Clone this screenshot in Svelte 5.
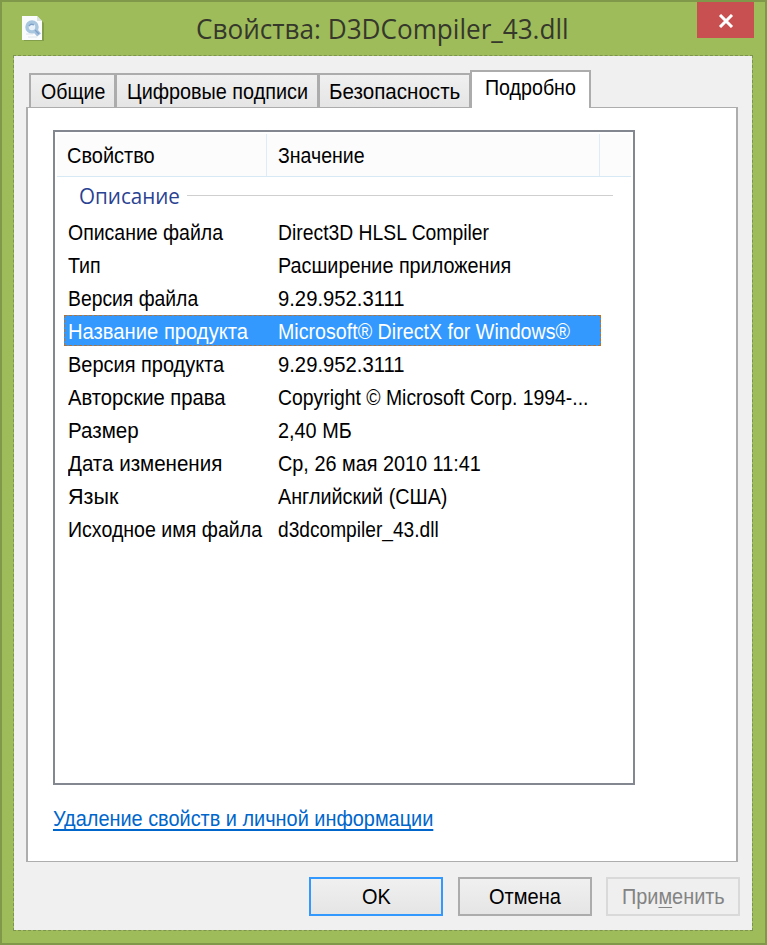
<script>
  const tabs = [
    { label: "Общие", width: 64, size: 87 },
    { label: "Цифровые подписи", width: 181, size: 204 },
    { label: "Безопасность", width: 131, size: 153 },
    { label: "Подробно", width: 91, size: 121 }
  ];

  // name, name width, value, value width
  const properties = [
    ["Описание файла", 155, "Direct3D HLSL Compiler", 211],
    ["Тип", 33, "Расширение приложения", 233],
    ["Версия файла", 130, "9.29.952.3111", 126],
    ["Название продукта", 180, "Microsoft® DirectX for Windows®", 292],
    ["Версия продукта", 156, "9.29.952.3111", 126],
    ["Авторские права", 158, "Copyright © Microsoft Corp. 1994-...", 310],
    ["Размер", 71, "2,40 МБ", 74],
    ["Дата изменения", 154, "Ср, 26 мая 2010 11:41", 203],
    ["Язык", 50, "Английский (США)", 169],
    ["Исходное имя файла", 194, "d3dcompiler_43.dll", 161]
  ];

  let activeTab = $state(3);
  let selected = $state(3);

  // Condense the label so it fills its box exactly
  function fit(node, width) {
    const inner = node.firstElementChild;
    inner.style.transform = `scaleX(${width / inner.offsetWidth})`;
  }
</script>

{#snippet label(text, width)}
  <span class="label" style="width: {width}px" use:fit={width}><span>{text}</span></span>
{/snippet}

<div class="window">
  <header class="titlebar">
    <svg class="file-icon" width="23" height="26" viewBox="0 0 23 26">
      <path d="M2 2h15l5 5v18H2z" fill="#6f8a40" opacity="0.6" />
      <path d="M0 0h15l5 5v19H0z" fill="#fafbfc" />
      <path d="M15 0v5h5z" fill="#dce2e0" />
      <path d="M12 13l5 6" stroke="#a3bfdb" stroke-width="5" />
      <circle cx="10" cy="11" r="5" fill="#e9f2f8" stroke="#a9c6df" stroke-width="3.5" />
      <path d="M7 10q2-3 5-1M13 14l4 4" fill="none" stroke="#7d9fc8" stroke-width="1.4" />
      <path d="M4 18h7M6 21h9" stroke="#dde6ed" />
    </svg>
    <h1>{@render label("Свойства: D3DCompiler_43.dll", 373)}</h1>
    <button class="close" aria-label="Закрыть">
      <svg width="16" height="14" viewBox="0 0 16 14">
        <path d="M2 1l12 12M14 1L2 13" stroke="#fff" stroke-width="3" />
      </svg>
    </button>
  </header>

  <main class="client">
    <nav class="tabs">
      {#each tabs as tab, i}
        <button
          class="tab"
          class:active={i === activeTab}
          style="width: {tab.size}px"
          onclick={() => (activeTab = i)}
        >
          {@render label(tab.label, tab.width)}
        </button>
      {/each}
    </nav>

    <section class="pane">
      <div class="list">
        <div class="list-header">
          <div class="name">{@render label("Свойство", 88)}</div>
          <div class="value">{@render label("Значение", 87)}</div>
          <div></div>
        </div>
        <div class="group">{@render label("Описание", 101)}</div>
        <div class="rows">
          {#each properties as [name, nameWidth, value, valueWidth], i}
            <!-- svelte-ignore a11y_click_events_have_key_events, a11y_no_static_element_interactions -->
            <div class="row" class:selected={i === selected} onclick={() => (selected = i)}>
              <div>{@render label(name, nameWidth)}</div>
              <div>{@render label(value, valueWidth)}</div>
            </div>
          {/each}
        </div>
      </div>
      <div class="link">{@render label("Удаление свойств и личной информации", 380)}</div>
    </section>

    <footer class="buttons">
      <button class="default">{@render label("OK", 29)}</button>
      <button>{@render label("Отмена", 72)}</button>
      <button disabled>
        <span class="label" style="width: 103px" use:fit={103}><span>При<u>м</u>енить</span></span>
      </button>
    </footer>
  </main>
</div>

<style>
  :global(body) {
    margin: 0;
    overflow: hidden;
  }

  .window {
    box-sizing: border-box;
    width: 767px;
    height: 945px;
    padding: 0 12px 12px 11px;
    border: 2px solid #80984a;
    background: #9fbc5b;
    color: #000;
    font: 22px/30px "Liberation Sans", Arial, sans-serif;
  }

  button {
    box-sizing: border-box;
    padding: 0;
    margin: 0;
    border: 0;
    font: inherit;
    color: inherit;
  }

  .label {
    display: inline-block;
    text-align: left;
    white-space: pre;
    vertical-align: top;
  }

  .label > span {
    display: inline-block;
    transform-origin: 0 50%;
  }

  .titlebar {
    display: flex;
    height: 53px;
  }

  .file-icon {
    margin: 14px 0 0 9px;
  }

  h1 {
    flex: 1;
    margin: 7px 0 0 151px;
    color: #35382b;
    font: 28px/38px "Open Sans", "Noto Sans", sans-serif;
  }

  .close {
    display: flex;
    align-items: center;
    justify-content: center;
    width: 57px;
    height: 36px;
    margin-right: -1px;
    padding-top: 2px;
    background: #c85050;
  }

  .client {
    box-sizing: border-box;
    height: 876px;
    padding: 14px 14px 0 12px;
    border: 1px dashed #7d9450;
    background: #f0f0f0;
    background-clip: padding-box;
  }

  .tabs {
    display: flex;
    align-items: flex-end;
    height: 38px;
    margin: 0 0 -1px 3px;
    position: relative;
  }

  .tab {
    height: 35px;
    padding-top: 2px;
    border: 2px solid #acacac;
    border-bottom-width: 1px;
    background: linear-gradient(#f0f0f0, #e5e5e5);
    text-align: center;
  }

  .tab + .tab {
    margin-left: -1px;
  }

  .tab.active {
    height: 38px;
    padding-bottom: 5px;
    padding-top: 0;
    border-bottom: 0;
    background: #fff;
  }

  .pane {
    box-sizing: border-box;
    width: 712px;
    height: 755px;
    padding: 22px 25px;
    border: 2px solid #adadad;
    border-top-width: 1px;
    border-bottom-width: 1px;
    background: #fff;
  }

  .list {
    box-sizing: border-box;
    width: 582px;
    height: 655px;
    padding: 2px;
    border: 2px solid #828790;
  }

  .list-header {
    display: grid;
    grid-template-columns: 210px 333px 1fr;
    height: 42px;
    border-bottom: 1px solid #d8e9f6;
    background: #fcfcfc;
    line-height: 44px;
  }

  .name,
  .value {
    height: 42px;
    padding-left: 10px;
    border-right: 1px solid #ddecf8;
  }

  .value {
    padding-left: 11px;
  }

  .group {
    display: flex;
    align-items: center;
    height: 39px;
    padding-left: 22px;
    color: #2a4292;
    font: 21px/39px "Open Sans", "Noto Sans", sans-serif;
  }

  .group::after {
    content: "";
    width: 426px;
    height: 1px;
    margin: -2px 0 0 7px;
    background: #cfcfcf;
  }

  .rows {
    display: grid;
    gap: 2px;
    padding-left: 7px;
  }

  .row {
    box-sizing: border-box;
    display: grid;
    grid-template-columns: 210px 1fr;
    width: 537px;
    height: 31px;
    padding-left: 4px;
    line-height: 33px;
  }

  .row.selected {
    padding-left: 3px;
    border: 1px dashed #c07020;
    background: #3399ff;
    color: #fff;
    line-height: 31px;
  }

  .link {
    margin-top: 19px;
    color: #0066cc;
  }

  .link :global(.label > span) {
    text-decoration: underline;
    text-decoration-thickness: 2px;
    text-underline-offset: 3px;
    text-decoration-skip-ink: none;
  }

  .buttons {
    display: flex;
    justify-content: flex-end;
    gap: 14.5px;
    padding-top: 15px;
    margin-right: -2px;
  }

  .buttons button {
    width: 134px;
    height: 39px;
    padding-top: 1px;
    border: 2px solid #acacac;
    background: linear-gradient(#f0f0f0, #e5e5e5);
  }

  .buttons .default {
    border-color: #3399ff;
  }

  .buttons button:disabled {
    border-color: #d9d9d9;
    background: #efefef;
    color: #838383;
  }

  u {
    text-decoration-thickness: 1px;
    text-underline-offset: 3px;
  }
</style>
